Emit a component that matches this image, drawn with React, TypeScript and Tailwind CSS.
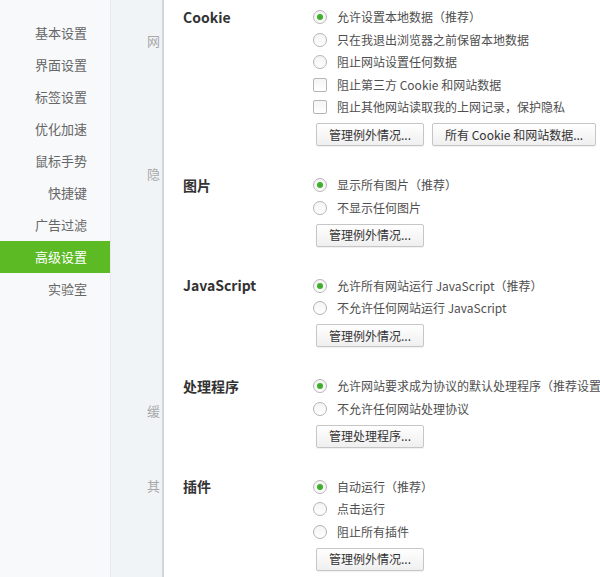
import React from "react";

const FONT = { fontFamily: '"Microsoft YaHei", "Noto Sans CJK SC", "Noto Sans", sans-serif' };

function Radio({ checked }: { checked?: boolean }) {
  return (
    <span className="flex h-[14px] w-[14px] shrink-0 items-center justify-center rounded-full border border-[#b4b4b4] bg-gradient-to-b from-[#f4f4f4] to-white">
      {checked && <span className="h-[6px] w-[6px] rounded-full bg-[#3fae29]" />}
    </span>
  );
}

function Check() {
  return <span className="h-[14px] w-[14px] shrink-0 rounded-[2px] border border-[#b4b4b4] bg-gradient-to-b from-[#f4f4f4] to-white" />;
}

function Opt({ kind, checked, label }: { kind: "r" | "c"; checked?: boolean; label: string }) {
  return (
    <div className="flex h-[22.5px] items-center gap-[10px]">
      {kind === "r" ? <Radio checked={checked} /> : <Check />}
      <span className="whitespace-nowrap text-[12px] text-[#4f4f4f]">{label}</span>
    </div>
  );
}

function Btn({ children }: { children: React.ReactNode }) {
  return (
    <button className="flex h-[23px] items-center whitespace-nowrap rounded-[2px] border border-[#c6c6c6] bg-gradient-to-b from-white to-[#efefef] px-[12px] text-[12px] text-[#333] shadow-[0_1px_1px_rgba(0,0,0,0.06)]">
      {children}
    </button>
  );
}

function Section({
  title,
  opts,
  buttons,
  last,
}: {
  title: string;
  opts: { kind: "r" | "c"; checked?: boolean; label: string }[];
  buttons: string[];
  last?: boolean;
}) {
  return (
    <div className={`flex ${last ? "" : "pb-[27.5px]"}`}>
      <div className="flex h-[22.5px] w-[130px] shrink-0 items-center text-[14px] font-bold text-[#333]">{title}</div>
      <div className="flex flex-col">
        {opts.map((o, i) => (
          <Opt key={i} {...o} />
        ))}
        <div className="ml-[3px] mt-[5px] flex gap-[8px]">
          {buttons.map((b) => (
            <Btn key={b}>{b}</Btn>
          ))}
        </div>
      </div>
    </div>
  );
}

const menu = ["基本设置", "界面设置", "标签设置", "优化加速", "鼠标手势", "快捷键", "广告过滤", "高级设置", "实验室"];

export default function App() {
  return (
    <div className="flex h-[577px] w-[600px] overflow-hidden bg-white" style={FONT}>
      <div className="w-[111px] shrink-0 border-r border-[#e6e8eb] bg-[#f8f9fb] pt-[17px]">
        {menu.map((m) => (
          <div
            key={m}
            className={`flex h-8 items-center justify-end pr-[23px] text-[13px] ${
              m === "高级设置" ? "bg-[#5cba24] text-white" : "text-[#666]"
            }`}
          >
            {m}
          </div>
        ))}
      </div>
      <div className="relative w-[51px] shrink-0 overflow-hidden bg-[#f1f4f7] text-[13px] text-[#a8a8a8]">
        <div className="absolute left-[36px] top-[31px]">网</div>
        <div className="absolute left-[36px] top-[164px]">隐</div>
        <div className="absolute left-[36px] top-[401px]">缓</div>
        <div className="absolute left-[36px] top-[476px]">其</div>
      </div>
      <div className="flex-1 overflow-hidden border-l-2 border-[#d3d5d8] bg-white pl-[19px] pt-[5.75px] shadow-[-2px_0_3px_rgba(0,0,0,0.12)]">
        <Section
          title="Cookie"
          opts={[
            { kind: "r", checked: true, label: "允许设置本地数据（推荐）" },
            { kind: "r", label: "只在我退出浏览器之前保留本地数据" },
            { kind: "r", label: "阻止网站设置任何数据" },
            { kind: "c", label: "阻止第三方 Cookie 和网站数据" },
            { kind: "c", label: "阻止其他网站读取我的上网记录，保护隐私" },
          ]}
          buttons={["管理例外情况...", "所有 Cookie 和网站数据..."]}
        />
        <Section
          title="图片"
          opts={[
            { kind: "r", checked: true, label: "显示所有图片（推荐）" },
            { kind: "r", label: "不显示任何图片" },
          ]}
          buttons={["管理例外情况..."]}
        />
        <Section
          title="JavaScript"
          opts={[
            { kind: "r", checked: true, label: "允许所有网站运行 JavaScript（推荐）" },
            { kind: "r", label: "不允许任何网站运行 JavaScript" },
          ]}
          buttons={["管理例外情况..."]}
        />
        <Section
          title="处理程序"
          opts={[
            { kind: "r", checked: true, label: "允许网站要求成为协议的默认处理程序（推荐设置）" },
            { kind: "r", label: "不允许任何网站处理协议" },
          ]}
          buttons={["管理处理程序..."]}
        />
        <Section
          title="插件"
          last
          opts={[
            { kind: "r", checked: true, label: "自动运行（推荐）" },
            { kind: "r", label: "点击运行" },
            { kind: "r", label: "阻止所有插件" },
          ]}
          buttons={["管理例外情况..."]}
        />
      </div>
    </div>
  );
}
